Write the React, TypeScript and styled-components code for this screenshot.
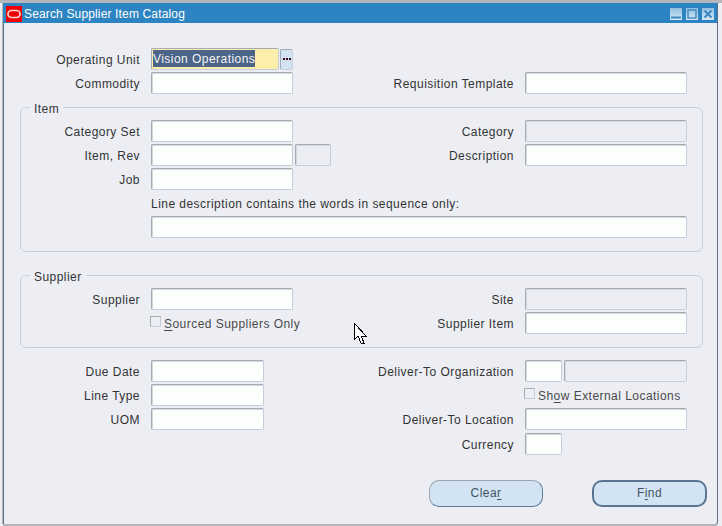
import React from "react";
import styled, { createGlobalStyle } from "styled-components";

const Global = createGlobalStyle`
  html, body { margin: 0; padding: 0; background: #eceef4; overflow: hidden; }
  body { font-family: "Liberation Sans", Arial, sans-serif; font-size: 12px; letter-spacing: 0.46px; color: #333; }
  u { text-underline-offset: 2px; }
`;

const Desktop = styled.div`
  position: relative;
  width: 722px;
  height: 526px;
  overflow: hidden;
  background: #eceef4;
  box-sizing: border-box;
  padding: 3px 0 0 3px;
  display: flex;
  flex-direction: column;
  &::before {
    content: "";
    position: absolute;
    inset: 0 0 auto 0;
    height: 3px;
    background: #b4b6bb;
  }
`;

const Win = styled.div`
  position: relative;
  width: 715px;
  height: 521px;
  box-sizing: border-box;
  background: #eceef4;
  border-right: 1px solid #5b6f88;
  border-left: 1px solid #5b6f88;
  box-shadow: -1px 0 0 #b4b6bb, 0 2px 0 #b4b6bb;
  border-bottom-right-radius: 3px;
  display: flex;
  flex-direction: column;
`;

const TitleBar = styled.div`
  height: 20px;
  flex: none;
  background: #2d84c2;
  color: #fff;
  display: flex;
  align-items: center;
  padding: 0 3px 0 3px;
  gap: 2px;
  margin-left: -1px;
`;

const TitleText = styled.span`
  flex: 1;
  font-size: 12px;
  letter-spacing: 0.15px;
  padding-top: 2px;
`;

const OracleMark = styled.svg`
  width: 16px;
  height: 16px;
  display: block;
  margin-top: 1px;
`;

const WinButtons = styled.div`
  display: flex;
  gap: 4px;
  margin-top: 2px;
`;

const WinButton = styled.svg`
  width: 12px;
  height: 12px;
  display: block;
`;

const Form = styled.div`
  padding: 25px 0 0 0;
  display: flex;
  flex-direction: column;
`;

const Row = styled.div<{ $top?: number; $inset?: boolean }>`
  display: flex;
  height: 22px;
  margin-top: ${(p) => p.$top ?? 2}px;
  align-items: center;
  --label-w: ${(p) => (p.$inset ? 119 : 136)}px;
`;

const LeftCell = styled.div`
  display: flex;
  align-items: center;
  width: calc(var(--label-w) + 153px);
  flex: none;
`;

const RightCell = styled.div`
  display: flex;
  align-items: center;
  flex: none;
`;

const Label = styled.span<{ $w?: number }>`
  flex: none;
  width: ${(p) => (p.$w ? `${p.$w}px` : "var(--label-w)")};
  text-align: right;
  margin-right: 11px;
  white-space: nowrap;
  line-height: 22px;
  padding-top: 2px;
`;

const Field = styled.div<{ $w: number; $off?: boolean; $gap?: number }>`
  flex: none;
  width: ${(p) => p.$w}px;
  height: 22px;
  box-sizing: border-box;
  border: 1px solid #c3cedd;
  border-top-color: #a4abb2;
  border-left-color: #a4abb2;
  border-radius: 2px;
  background: ${(p) => (p.$off ? "#ebedf2" : "#fdfffd")};
  box-shadow: inset 1px 1px 0 #d5d9de;
  margin-left: ${(p) => p.$gap ?? 0}px;
`;

const FocusField = styled.div`
  flex: none;
  width: 128px;
  height: 22px;
  box-sizing: border-box;
  border: 1px solid #c3cedd;
  border-top-color: #a4abb2;
  border-left-color: #a4abb2;
  border-radius: 2px;
  background: #fdeeab;
  padding: 1px 0 0 1px;
`;

const Selected = styled.span`
  display: inline-block;
  height: 17px;
  line-height: 19px;
  overflow: hidden;
  vertical-align: top;
  background: #4c6488;
  color: #f4f4f4;
`;

const LovButton = styled.div`
  flex: none;
  width: 13px;
  height: 21px;
  margin-left: 1px;
  box-sizing: border-box;
  border: 1px solid #c3cedd;
  border-top-color: #a4abb2;
  border-left-color: #a4abb2;
  border-radius: 2px;
  background: #d2e3f2;
  display: flex;
  align-items: center;
  justify-content: center;
  gap: 1px;
`;

const LovDot = styled.i`
  width: 2px;
  height: 2px;
  background: #3a0a14;
  display: block;
`;

const Section = styled.section<{ $top: number }>`
  position: relative;
  margin: ${(p) => p.$top}px 14px 0 16px;
  border: 1px solid #c6d1e0;
  border-radius: 6px;
  padding: 12px 0 13px 0;
`;

const Legend = styled.span`
  position: absolute;
  top: -6px;
  left: 9px;
  padding: 0 4px;
  background: #eceef4;
  line-height: 14px;
`;

const WideLabel = styled.div`
  margin: 8px 0 5px 130px;
  line-height: 13px;
  height: 13px;
`;

const WideRow = styled.div`
  margin-left: 130px;
`;

const CheckWrap = styled.div<{ $ml?: number }>`
  display: flex;
  align-items: center;
  gap: 3px;
  margin-left: ${(p) => p.$ml ?? 0}px;
  color: #4a4a4a;
  white-space: nowrap;
  padding-top: 2px;
`;

const CheckBox = styled.span`
  width: 11px;
  height: 11px;
  box-sizing: border-box;
  border: 1px solid #a9aeb4;
  border-right-color: #c9ced6;
  border-bottom-color: #c9ced6;
  background: #eceef4;
  margin-top: -5px;
`;

const Footer = styled.div`
  display: flex;
  margin: 25px 0 0 425px;
  gap: 49px;
`;

const ActionButton = styled.div<{ $main?: boolean }>`
  width: ${(p) => (p.$main ? 115 : 114)}px;
  height: 27px;
  box-sizing: border-box;
  background: #d2e4f3;
  border-radius: 10px;
  border: ${(p) => (p.$main ? "2px solid #5b7492" : "1px solid #9aa4ae")};
  ${(p) => (p.$main ? "" : "border-right-color:#5d7897;border-bottom-color:#5d7897;")}
  color: #445264;
  text-align: center;
  line-height: ${(p) => (p.$main ? 23 : 25)}px;
`;

const Cursor = styled.svg`
  position: absolute;
  left: 354px;
  top: 323px;
  width: 13px;
  height: 21px;
`;

export default function App() {
  return (
    <Desktop>
      <Global />
      <Win>
        <TitleBar>
          <OracleMark viewBox="0 0 16 16">
            <rect width="16" height="16" fill="#f40000" />
            <rect x="2" y="4.5" width="12" height="7" rx="3.5" fill="none" stroke="#f6d9d6" strokeWidth="1.7" />
          </OracleMark>
          <TitleText>Search Supplier Item Catalog</TitleText>
          <WinButtons>
            <WinButton viewBox="0 0 12 12">
              <defs>
                <linearGradient id="wb" x1="0" y1="0" x2="0" y2="1">
                  <stop offset="0" stopColor="#8fc0e2" />
                  <stop offset="1" stopColor="#d6e8f5" />
                </linearGradient>
              </defs>
              <rect width="12" height="12" fill="url(#wb)" />
              <rect x="1" y="8.500" width="10" height="2" fill="#3f86bd" />
            </WinButton>
            <WinButton viewBox="0 0 12 12">
              <rect width="12" height="12" fill="url(#wb)" />
              <rect x="2" y="2" width="8" height="8" fill="none" stroke="#3f86bd" strokeWidth="1.4" />
            </WinButton>
            <WinButton viewBox="0 0 12 12">
              <rect width="12" height="12" fill="url(#wb)" />
              <path d="M2.5 2.5 9.5 9.5M9.5 2.5 2.5 9.5" stroke="#3f86bd" strokeWidth="2" />
            </WinButton>
          </WinButtons>
        </TitleBar>
        <Form>
          <Row $top={0}>
            <LeftCell>
              <Label>Operating Unit</Label>
              <FocusField><Selected>Vision Operations</Selected></FocusField>
              <LovButton><LovDot /><LovDot /><LovDot /></LovButton>
            </LeftCell>
          </Row>
          <Row>
            <LeftCell>
              <Label>Commodity</Label>
              <Field $w={142} />
            </LeftCell>
            <RightCell>
              <Label $w={221}>Requisition Template</Label>
              <Field $w={162} />
            </RightCell>
          </Row>

          <Section $top={13}>
            <Legend>Item</Legend>
            <Row $top={0} $inset>
              <LeftCell>
                <Label>Category Set</Label>
                <Field $w={142} />
              </LeftCell>
              <RightCell>
                <Label $w={221}>Category</Label>
                <Field $w={162} $off />
              </RightCell>
            </Row>
            <Row $inset>
              <LeftCell>
                <Label>Item, Rev</Label>
                <Field $w={142} />
                <Field $w={36} $off $gap={2} />
              </LeftCell>
              <RightCell>
                <Label $w={221}>Description</Label>
                <Field $w={162} />
              </RightCell>
            </Row>
            <Row $inset>
              <LeftCell>
                <Label>Job</Label>
                <Field $w={142} />
              </LeftCell>
            </Row>
            <WideLabel>Line description contains the words in sequence only:</WideLabel>
            <WideRow><Field $w={536} /></WideRow>
          </Section>

          <Section $top={23}>
            <Legend>Supplier</Legend>
            <Row $top={0} $inset>
              <LeftCell>
                <Label>Supplier</Label>
                <Field $w={142} />
              </LeftCell>
              <RightCell>
                <Label $w={221}>Site</Label>
                <Field $w={162} $off />
              </RightCell>
            </Row>
            <Row $inset>
              <LeftCell>
                <CheckWrap $ml={129}>
                  <CheckBox />
                  <span><u>S</u>ourced Suppliers Only</span>
                </CheckWrap>
              </LeftCell>
              <RightCell>
                <Label $w={221}>Supplier Item</Label>
                <Field $w={162} />
              </RightCell>
            </Row>
          </Section>

          <Row $top={12}>
            <LeftCell>
              <Label>Due Date</Label>
              <Field $w={113} />
            </LeftCell>
            <RightCell>
              <Label $w={221}>Deliver-To Organization</Label>
              <Field $w={37} />
              <Field $w={123} $off $gap={2} />
            </RightCell>
          </Row>
          <Row>
            <LeftCell>
              <Label>Line Type</Label>
              <Field $w={113} />
            </LeftCell>
            <RightCell>
              <CheckWrap $ml={231}>
                <CheckBox />
                <span>Sh<u>o</u>w External Locations</span>
              </CheckWrap>
            </RightCell>
          </Row>
          <Row>
            <LeftCell>
              <Label>UOM</Label>
              <Field $w={113} />
            </LeftCell>
            <RightCell>
              <Label $w={221}>Deliver-To Location</Label>
              <Field $w={162} />
            </RightCell>
          </Row>
          <Row $top={3}>
            <LeftCell />
            <RightCell>
              <Label $w={221}>Currency</Label>
              <Field $w={37} />
            </RightCell>
          </Row>
          <Footer>
            <ActionButton>Clea<u>r</u></ActionButton>
            <ActionButton $main>F<u>i</u>nd</ActionButton>
          </Footer>
        </Form>
      </Win>
      <Cursor viewBox="0 0 13 21">
        <path d="M.5.5V16.5L4 13l3 7h3l-2.500-6.500H12.500Z" fill="#fff" stroke="#000" strokeWidth="1" shapeRendering="crispEdges" />
      </Cursor>
    </Desktop>
  );
}
